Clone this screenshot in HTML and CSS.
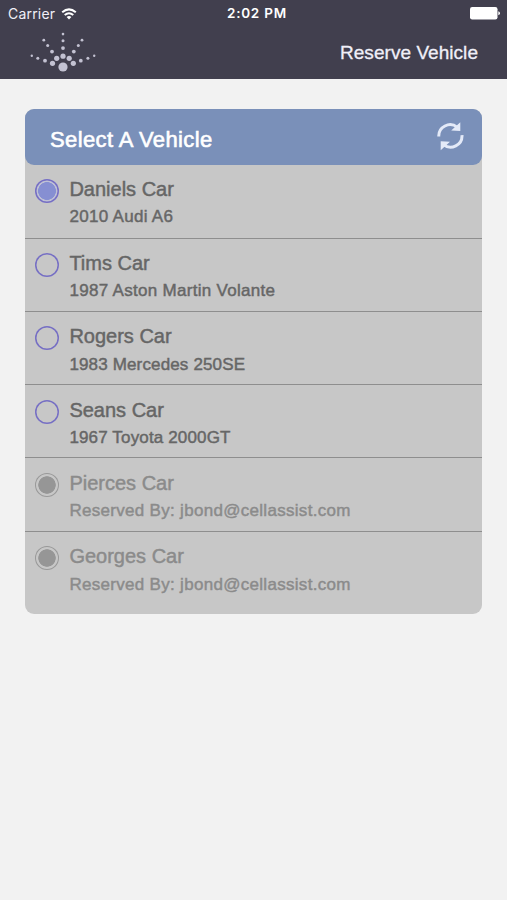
FILE: index.html
```html
<!DOCTYPE html>
<html lang="en">
<head>
<meta charset="utf-8">
<title>Reserve Vehicle</title>
<link rel="stylesheet" href="styles.css">
</head>
<body>
<header class="header">
  <div class="status">
    <div class="carrier"><span>Carrier</span>
      <svg class="wifi" width="16" height="12" viewBox="0 0 16 12" fill="none" stroke="#fff" stroke-width="2"><path d="M1.2 4.3Q8-1.5 14.8 4.3M3.7 7Q8 3.4 12.3 7"/><path d="M8 11.4 5.6 8.9Q8 7 10.4 8.9Z" fill="#fff" stroke="none"/></svg>
    </div>
    <div class="time">2:02 PM</div>
    <svg class="battery" width="30" height="13" viewBox="0 0 30 13" fill="#fff"><rect width="27.5" height="12.5" rx="2.2"/><path d="M28.3 4.3Q30 4.8 30 6.3T28.3 8.3Z"/></svg>
  </div>
  <div class="navbar">
    <svg class="logo" width="68" height="42" viewBox="29 31 68 42" fill="#c3c2d2">
      <circle cx="63" cy="67" r="4.6"/>
      <circle cx="52.5" cy="63.3" r="2.6"/><circle cx="56.7" cy="58.3" r="2.6"/><circle cx="63" cy="56.2" r="2.6"/><circle cx="69.2" cy="58.3" r="2.6"/><circle cx="73.3" cy="63.3" r="2.6"/>
      <circle cx="45" cy="60.7" r="1.9"/><circle cx="52" cy="51.6" r="1.9"/><circle cx="63" cy="48.1" r="1.9"/><circle cx="73.8" cy="51.6" r="1.9"/><circle cx="80.8" cy="60.7" r="1.9"/>
      <circle cx="37.8" cy="58.2" r="1.5"/><circle cx="47.7" cy="45.5" r="1.5"/><circle cx="63" cy="40.8" r="1.5"/><circle cx="78.3" cy="45.5" r="1.5"/><circle cx="87.9" cy="58.2" r="1.5"/>
      <circle cx="31.8" cy="55.8" r="1.2"/><circle cx="43.8" cy="40.2" r="1.4"/><circle cx="63" cy="34.1" r="1.3"/><circle cx="82" cy="40.2" r="1.4"/><circle cx="94.2" cy="55.8" r="1.2"/>
    </svg>
    <h1 class="title">Reserve Vehicle</h1>
  </div>
</header>
<main class="panel">
  <div class="panel-head">
    <h2 class="panel-title">Select A Vehicle</h2>
    <svg class="refresh" width="28" height="30" viewBox="436 121 28 30" fill="none" stroke="#e4eaf8" stroke-width="3"><path d="M438.8 136.5C438.3 127 449.5 121 457.3 127.3M462 135.2C462.5 145 451 150.8 443.6 144.6"/><path d="M460.3 122.2V131L451.2 130.6ZM440.7 150.2V141.2L450 141.7Z" fill="#e4eaf8" stroke="none"/></svg>
  </div>
  <ul class="list">
    <li class="row"><span class="radio selected"></span><div><div class="name">Daniels Car</div><div class="detail wide">2010 Audi A6</div></div></li>
    <li class="row"><span class="radio"></span><div><div class="name">Tims Car</div><div class="detail wide">1987 Aston Martin Volante</div></div></li>
    <li class="row"><span class="radio"></span><div><div class="name">Rogers Car</div><div class="detail">1983 Mercedes 250SE</div></div></li>
    <li class="row"><span class="radio"></span><div><div class="name">Seans Car</div><div class="detail">1967 Toyota 2000GT</div></div></li>
    <li class="row reserved"><span class="radio selected"></span><div><div class="name">Pierces Car</div><div class="detail wide">Reserved By: jbond@cellassist.com</div></div></li>
    <li class="row reserved"><span class="radio selected"></span><div><div class="name">Georges Car</div><div class="detail wide">Reserved By: jbond@cellassist.com</div></div></li>
  </ul>
</main>
</body>
</html>
```
FILE: styles.css
```css
* { box-sizing: border-box; }
body {
  margin: 0;
  min-height: 900px;
  background: #f2f2f2;
  font-family: "Liberation Sans", Arial, sans-serif;
}
.header { height: 79px; background: #413f4e; color: #f0eff8; }
.status {
  height: 27px;
  padding: 0 7px 0 8px;
  display: grid;
  grid-template-columns: 219px auto 1fr;
  align-items: center;
  font: 14px/27px Inter, sans-serif;
}
.carrier { display: flex; align-items: center; gap: 5.5px; letter-spacing: .2px; }
.time { font-size: 13.5px; font-weight: 600; letter-spacing: .75px; color: #fff; }
.battery { justify-self: end; }
.navbar {
  height: 52px;
  padding: 0 29px;
  display: flex;
  justify-content: space-between;
}
.logo { margin-top: 4px; }
.title {
  margin: 0;
  font-size: 19px;
  font-weight: 400;
  line-height: 52px;
  letter-spacing: .05px;
  -webkit-text-stroke: .3px;
}
.panel {
  margin: 29.5px 24.6px 0 25.4px;
  height: 505px;
  border-radius: 9px;
  background: #c7c7c7;
}
.panel-head {
  height: 56px;
  padding: 0 18.4px 0 24.6px;
  display: flex;
  align-items: center;
  justify-content: space-between;
  border-radius: 9px;
  background: #7a90b9;
}
.panel-title {
  margin: 7px 0 0;
  font-size: 22px;
  font-weight: 400;
  line-height: 28px;
  letter-spacing: .38px;
  color: #fff;
  -webkit-text-stroke: .6px;
}
.refresh { margin-top: -1px; }
.list { margin: 0; padding: 0; list-style: none; }
.row {
  height: 73.33px;
  padding: 11.5px 10px 0;
  display: flex;
  gap: 10px;
  border-bottom: 1px solid #8e8e8e;
  color: #666;
}
.row:first-child { height: 74px; }
.row:last-child { border-bottom: 0; }
.radio {
  width: 24px;
  height: 24px;
  margin-top: 3px;
  border-radius: 50%;
  box-shadow: inset 0 0 0 1.5px #766fc4;
}
.radio.selected {
  background: radial-gradient(circle, #868fd2 8.6px, #bfc1d5 9.2px, #bfc1d5 11px);
}
.reserved .radio {
  box-shadow: inset 0 0 0 1px #999;
  background: radial-gradient(circle, #969696 8.4px, #c7c7c7 9px);
}
.name { font-size: 20px; line-height: 27.4px; -webkit-text-stroke: .45px; }
.detail { font-size: 17px; line-height: 27px; letter-spacing: .15px; -webkit-text-stroke: .45px; }
.wide { letter-spacing: .3px; }
.reserved { color: #8b8b8b; }
```
